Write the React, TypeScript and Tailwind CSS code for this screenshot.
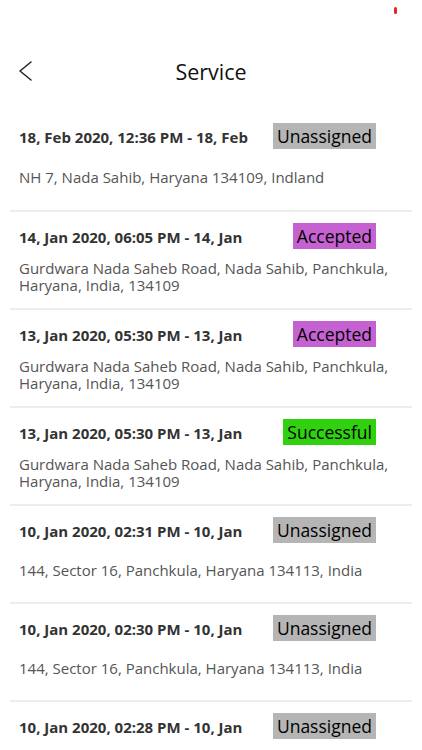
type Status = 'Unassigned' | 'Accepted' | 'Successful';

const STATUS_BG: Record<Status, string> = {
  Unassigned: 'bg-[#b5b5b5]',
  Accepted: 'bg-[#c661d2]',
  Successful: 'bg-[#30d20f]',
};

const ROWS: { date: string; address?: string; status: Status }[] = [
  { date: '18, Feb 2020, 12:36 PM - 18, Feb', address: 'NH 7, Nada Sahib, Haryana 134109, Indland', status: 'Unassigned' },
  { date: '14, Jan 2020, 06:05 PM - 14, Jan', address: 'Gurdwara Nada Saheb Road, Nada Sahib, Panchkula, Haryana, India, 134109', status: 'Accepted' },
  { date: '13, Jan 2020, 05:30 PM - 13, Jan', address: 'Gurdwara Nada Saheb Road, Nada Sahib, Panchkula, Haryana, India, 134109', status: 'Accepted' },
  { date: '13, Jan 2020, 05:30 PM - 13, Jan', address: 'Gurdwara Nada Saheb Road, Nada Sahib, Panchkula, Haryana, India, 134109', status: 'Successful' },
  { date: '10, Jan 2020, 02:31 PM - 10, Jan', address: '144, Sector 16, Panchkula, Haryana 134113, India', status: 'Unassigned' },
  { date: '10, Jan 2020, 02:30 PM - 10, Jan', address: '144, Sector 16, Panchkula, Haryana 134113, India', status: 'Unassigned' },
  // last one is cut off by the screen edge, address is below the fold
  { date: '10, Jan 2020, 02:28 PM - 10, Jan', status: 'Unassigned' },
];

export default function App() {
  return (
    <div className="h-[750px] w-[422px] overflow-hidden bg-white font-['Open_Sans',sans-serif]">
      <div className="relative h-[112px]">
        <span className="absolute left-[394px] top-[7px] h-[7px] w-[3px] rounded-full bg-[#e3262b]" />
        <div className="grid grid-cols-[1fr_auto_1fr] items-center pt-[52px]">
          <div className="pl-[17px]">
            <svg width="16" height="22" viewBox="0 0 16 22" fill="none" stroke="#222" strokeWidth="1.5" strokeLinecap="round" strokeLinejoin="round">
              <path d="M14 1 L3 10 L14 19" />
            </svg>
          </div>
          <h1 className="text-[21.5px] leading-[40px] text-[#111]">Service</h1>
          <div />
        </div>
      </div>

      {ROWS.map((r, i) => (
        <div key={i} className={`mx-[10px] flex h-[98px] flex-col ${i > 0 ? 'border-t-2 border-[#ececec]' : ''}`}>
          <div className="flex items-center justify-between pl-[9px] pr-[36px] pt-[11px]">
            <span className="pt-[3px] text-[15px] font-bold text-[#333]">{r.date}</span>
            <span className={`h-[26px] px-[4px] text-[17.5px] leading-[26px] font-medium text-black ${STATUS_BG[r.status]}`}>{r.status}</span>
          </div>
          {r.address && (
            <div className="flex flex-1 items-center pb-[4px] pl-[9px] pr-[8px]">
              <p className="text-[15px] leading-[17px] text-[#555]">{r.address}</p>
            </div>
          )}
        </div>
      ))}
    </div>
  );
}
